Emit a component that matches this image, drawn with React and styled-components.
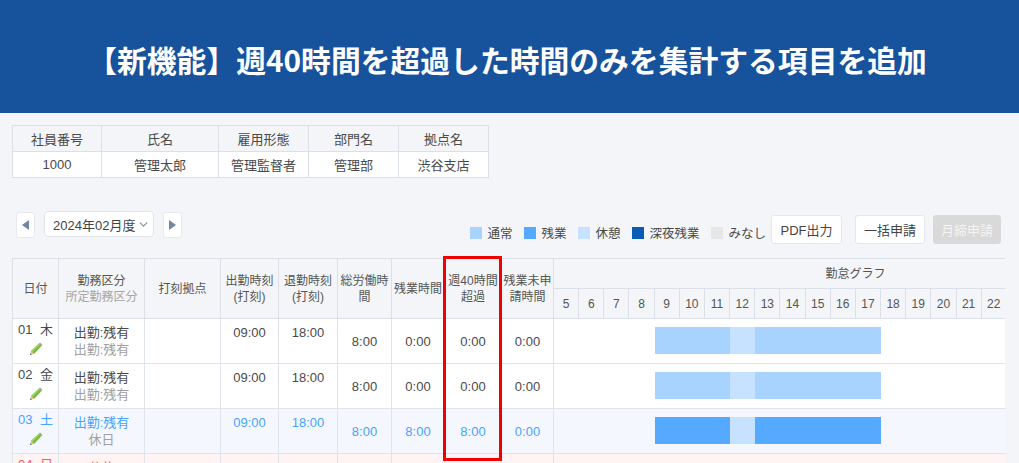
import React from "react";
import styled, { createGlobalStyle } from "styled-components";
import { ChevronDown } from "lucide-react";

const GlobalStyle = createGlobalStyle`
  html, body {
    margin: 0;
    padding: 0;
    height: 463px;
    overflow: hidden;
    background: #f3f5f8;
  }
  body {
    font-family: "Liberation Sans", "Noto Sans CJK JP", sans-serif;
    color: #4a4a4a;
  }
`;

const Page = styled.div`
  width: 1019px;
  height: 463px;
  overflow: hidden;
`;

const Banner = styled.header`
  height: 113px;
  background: #17529c;
  display: flex;
  align-items: center;
  justify-content: center;
  color: #fff;
  font-family: "Noto Sans CJK JP", sans-serif;
  font-size: 29.8px;
  font-weight: 700;
  padding: 5px 5px 0 0;
  box-sizing: border-box;
`;

const Main = styled.main`
  padding: 12px 14px 0 12px;
`;

const InfoTable = styled.table`
  width: 477px;
  table-layout: fixed;
  border-collapse: collapse;
  font-size: 13px;
  text-align: center;

  th, td {
    border: 1px solid #dbe0e8;
    padding: 0;
    font-weight: 400;
  }
  th {
    height: 25px;
    background: #f3f5f8;
  }
  td {
    height: 25px;
    background: #fff;
  }
`;

const Toolbar = styled.div`
  display: flex;
  justify-content: space-between;
  margin-top: 33px;
  padding: 0 4px 0 4px;
  height: 47px;
`;

const Period = styled.div`
  display: flex;
  align-items: flex-start;
  gap: 9px;
`;

const ArrowButton = styled.button`
  width: 19px;
  height: 26px;
  margin-top: 1px;
  padding: 0;
  border: 1px solid #e6e9ee;
  border-radius: 3px;
  background: #fff;
  display: flex;
  align-items: center;
  justify-content: center;
`;

const Triangle = styled.span`
  width: 0;
  height: 0;
  border-top: 5.5px solid transparent;
  border-bottom: 5.5px solid transparent;
  ${({ $dir }) =>
    $dir === "left"
      ? "border-right: 7px solid #6f87a3;"
      : "border-left: 7px solid #6f87a3;"}
`;

const PeriodSelect = styled.div`
  width: 110px;
  height: 26px;
  box-sizing: border-box;
  border: 1px solid #e0e4ea;
  border-radius: 4px;
  background: #fff;
  display: flex;
  align-items: center;
  justify-content: space-between;
  padding: 0 3px 0 8px;
  font-size: 13px;
  white-space: nowrap;
  color: #444;

  svg {
    flex: none;
    color: #7d8ea3;
  }
`;

const Actions = styled.div`
  display: flex;
  align-items: flex-start;
  margin-top: 4px;
`;

const Legend = styled.ul`
  display: flex;
  gap: 12px;
  list-style: none;
  margin: 11px 5px 0 0;
  padding: 0;
  font-size: 12.5px;
`;

const LegendItem = styled.li`
  display: flex;
  align-items: center;
  gap: 5px;
  height: 13px;
  white-space: nowrap;
`;

const Swatch = styled.span`
  width: 12px;
  height: 12px;
  background: ${({ $color }) => $color};
`;

const ActionButton = styled.button`
  height: 29px;
  width: ${({ $width }) => $width}px;
  margin-left: ${({ $gap }) => $gap}px;
  padding: 0;
  border: 1px solid ${({ disabled }) => (disabled ? "#d9d9d9" : "#e3e7ed")};
  border-radius: 3px;
  background: ${({ disabled }) => (disabled ? "#d9d9d9" : "#fff")};
  color: ${({ disabled }) => (disabled ? "#f4f4f4" : "#444")};
  font-family: inherit;
  font-size: 13px;
`;

const TableWrap = styled.div`
  position: relative;
  width: 993px;
`;

const TableScroll = styled.div`
  width: 993px;
  overflow: hidden;
`;

const Highlight = styled.div`
  position: absolute;
  left: 431px;
  top: -2px;
  width: 59px;
  height: 205px;
  box-sizing: border-box;
  border: 3px solid #f00000;
  pointer-events: none;
`;

const AttendanceTable = styled.table`
  width: 1146px;
  table-layout: fixed;
  border-collapse: collapse;
  text-align: center;
`;

const HeadCell = styled.th`
  border: 1px solid #dbe0e8;
  background: #f3f5f8;
  padding: 0;
  height: 29px;
  font-size: 12px;
  font-weight: 400;
  line-height: 16px;
  color: #555;
`;

const SubHead = styled.div`
  color: #a5a5a5;
`;

const Row = styled.tr`
  height: 45px;
  background: ${({ $tone }) =>
    $tone === "blue" ? "#f4f8fe" : $tone === "red" ? "#fff3f3" : "#fff"};
  color: ${({ $tone }) =>
    $tone === "blue" ? "#48a2ff" : $tone === "red" ? "#f4575c" : "#4a4a4a"};
`;

const Cell = styled.td`
  border: 1px solid #dfe3ea;
  padding: ${({ $top }) => ($top ? "5px 0 0" : "0")};
  vertical-align: ${({ $top }) => ($top ? "top" : "middle")};
  font-size: 13px;
  line-height: 17px;
`;

const DateCell = styled(Cell)`
  padding-top: 3px;
`;

const DateLine = styled.div`
  display: flex;
  justify-content: space-between;
  padding: 0 5px 0 5px;
  line-height: 15px;
`;

const PencilWrap = styled.div`
  height: 14px;
  margin-top: 5px;
`;

const Planned = styled.div`
  color: #a0a0a0;
`;

const Track = styled.div`
  display: grid;
  grid-template-columns: repeat(24, 1fr);
  height: 27px;
  margin-bottom: 2px;
`;

const Segment = styled.div`
  grid-column: ${({ $from }) => $from} / ${({ $to }) => $to};
  background: ${({ $color }) => $color};
`;

const Pencil = () => (
  <svg width="14" height="14" viewBox="0 0 14 14">
    <polygon points="1,13 2,9 5,12" fill="#e9c48f" />
    <polygon points="1,13 1.5,11.2 2.8,12.5" fill="#555" />
    <polygon points="2,9 10,1.5 12.5,4 5,12" fill="#7cb53f" />
    <polygon points="2,9 10,1.5 11,2.5 3.2,10.2" fill="#a3d35f" />
    <polygon points="10,1.5 11,0.6 13.4,3 12.5,4" fill="#9a9a9a" />
  </svg>
);

const infoColumns = [
  { label: "社員番号", value: "1000", width: 89 },
  { label: "氏名", value: "管理太郎", width: 117 },
  { label: "雇用形態", value: "管理監督者", width: 90 },
  { label: "部門名", value: "管理部", width: 90 },
  { label: "拠点名", value: "渋谷支店", width: 90 },
];

const legend = [
  { label: "通常", color: "#a8d3ff" },
  { label: "残業", color: "#55aaff" },
  { label: "休憩", color: "#c6e2ff" },
  { label: "深夜残業", color: "#0a5bb5" },
  { label: "みなし", color: "#e6e6e6" },
];

const columnWidths = [46, 86, 76, 58, 59, 54, 53, 57, 52];
const hours = Array.from({ length: 24 }, (_, i) => i + 5);

const rows = [
  { day: "01", week: "木", kind: "出勤:残有", planned: "出勤:残有", start: "09:00", end: "18:00", total: "8:00", over: "0:00", week40: "0:00", pending: "0:00", bar: "#a8d3ff" },
  { day: "02", week: "金", kind: "出勤:残有", planned: "出勤:残有", start: "09:00", end: "18:00", total: "8:00", over: "0:00", week40: "0:00", pending: "0:00", bar: "#a8d3ff" },
  { day: "03", week: "土", kind: "出勤:残有", planned: "休日", start: "09:00", end: "18:00", total: "8:00", over: "8:00", week40: "8:00", pending: "0:00", bar: "#55aaff", tone: "blue" },
  { day: "04", week: "日", kind: "公休", planned: "公休", tone: "red" },
];

const App = () => {
  return (
    <Page>
      <GlobalStyle />
      <Banner>【新機能】週40時間を超過した時間のみを集計する項目を追加</Banner>
      <Main>
        <InfoTable>
          <colgroup>
            {infoColumns.map((col) => (
              <col key={col.label} style={{ width: col.width }} />
            ))}
          </colgroup>
          <thead>
            <tr>
              {infoColumns.map((col) => (
                <th key={col.label}>{col.label}</th>
              ))}
            </tr>
          </thead>
          <tbody>
            <tr>
              {infoColumns.map((col) => (
                <td key={col.label}>{col.value}</td>
              ))}
            </tr>
          </tbody>
        </InfoTable>

        <Toolbar>
          <Period>
            <ArrowButton>
              <Triangle $dir="left" />
            </ArrowButton>
            <PeriodSelect>
              2024年02月度
              <ChevronDown size={13} />
            </PeriodSelect>
            <ArrowButton>
              <Triangle $dir="right" />
            </ArrowButton>
          </Period>
          <Actions>
            <Legend>
              {legend.map((item) => (
                <LegendItem key={item.label}>
                  <Swatch $color={item.color} />
                  {item.label}
                </LegendItem>
              ))}
            </Legend>
            <ActionButton $width={71} $gap={0}>PDF出力</ActionButton>
            <ActionButton $width={70} $gap={13}>一括申請</ActionButton>
            <ActionButton $width={68} $gap={8} disabled>月締申請</ActionButton>
          </Actions>
        </Toolbar>

        <TableWrap>
          <TableScroll>
            <AttendanceTable>
              <colgroup>
                {columnWidths.map((width, i) => (
                  <col key={i} style={{ width }} />
                ))}
                {hours.map((hour) => (
                  <col key={hour} />
                ))}
              </colgroup>
              <thead>
                <tr>
                  <HeadCell rowSpan={2}>日付</HeadCell>
                  <HeadCell rowSpan={2}>
                    勤務区分
                    <SubHead>所定勤務区分</SubHead>
                  </HeadCell>
                  <HeadCell rowSpan={2}>打刻拠点</HeadCell>
                  <HeadCell rowSpan={2}>出勤時刻<br />(打刻)</HeadCell>
                  <HeadCell rowSpan={2}>退勤時刻<br />(打刻)</HeadCell>
                  <HeadCell rowSpan={2}>総労働時<br />間</HeadCell>
                  <HeadCell rowSpan={2}>残業時間</HeadCell>
                  <HeadCell rowSpan={2}>週40時間<br />超過</HeadCell>
                  <HeadCell rowSpan={2}>残業未申<br />請時間</HeadCell>
                  <HeadCell colSpan={24}>勤怠グラフ</HeadCell>
                </tr>
                <tr>
                  {hours.map((hour) => (
                    <HeadCell key={hour}>{hour}</HeadCell>
                  ))}
                </tr>
              </thead>
              <tbody>
                {rows.map((row) => (
                  <Row key={row.day} $tone={row.tone}>
                    <DateCell $top>
                      <DateLine>
                        <span>{row.day}</span>
                        <span>{row.week}</span>
                      </DateLine>
                      <PencilWrap>
                        <Pencil />
                      </PencilWrap>
                    </DateCell>
                    <Cell $top>
                      {row.kind}
                      <Planned>{row.planned}</Planned>
                    </Cell>
                    <Cell />
                    <Cell $top>{row.start}</Cell>
                    <Cell $top>{row.end}</Cell>
                    <Cell>{row.total}</Cell>
                    <Cell>{row.over}</Cell>
                    <Cell>{row.week40}</Cell>
                    <Cell>{row.pending}</Cell>
                    <Cell colSpan={24}>
                      {row.bar && (
                        <Track>
                          <Segment $from={5} $to={8} $color={row.bar} />
                          <Segment $from={8} $to={9} $color="#c6e2ff" />
                          <Segment $from={9} $to={14} $color={row.bar} />
                        </Track>
                      )}
                    </Cell>
                  </Row>
                ))}
              </tbody>
            </AttendanceTable>
          </TableScroll>
          <Highlight />
        </TableWrap>
      </Main>
    </Page>
  );
};

export default App;
